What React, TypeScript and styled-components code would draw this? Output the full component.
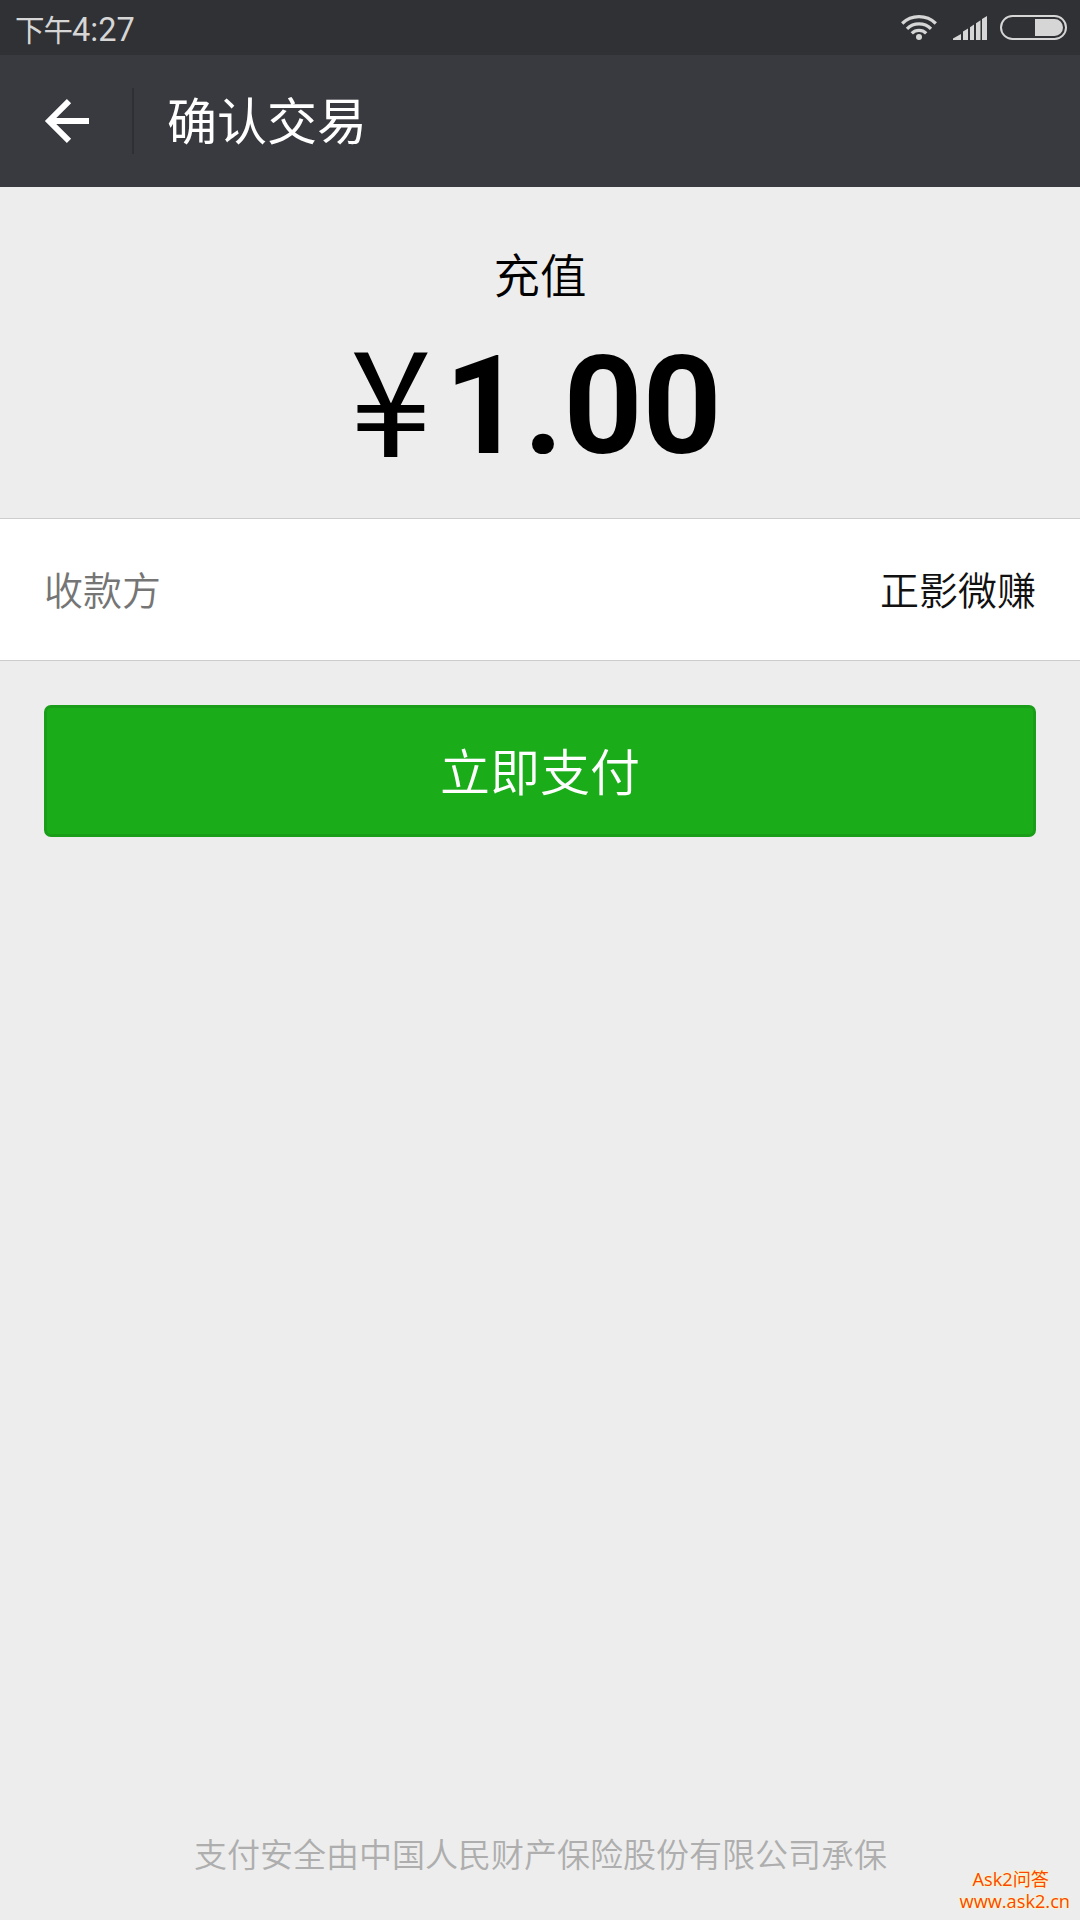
import React from 'react';
import styled, { createGlobalStyle } from 'styled-components';

const GlobalStyle = createGlobalStyle`
  * { box-sizing: border-box; }
  body {
    margin: 0;
    background: #ededed;
    font-family: "Noto Sans CJK SC", sans-serif;
    font-weight: 350;
  }
`;

const Screen = styled.div`
  position: relative;
  display: flex;
  flex-direction: column;
  width: 1080px;
  height: 1920px;
  overflow: hidden;
  background: #ededed;
`;

const StatusBar = styled.div`
  display: flex;
  align-items: center;
  justify-content: space-between;
  height: 55px;
  padding: 0 13px 0 15px;
  background: #303135;
  color: #d6d6d6;
`;

const Clock = styled.div`
  display: flex;
  align-items: baseline;
  height: 55px;
  line-height: 56px;
  font-size: 29.5px;
  font-weight: 400;
  letter-spacing: -1px;
`;

const Digits = styled.span`
  font-family: Roboto, sans-serif;
  font-size: 32.5px;
  letter-spacing: 0;
`;

const StatusIcons = styled.div`
  display: flex;
  align-items: center;
  height: 55px;
`;

const Header = styled.header`
  display: flex;
  align-items: center;
  height: 132px;
  background: #393a3f;
  color: #fff;
`;

const BackButton = styled.button`
  display: flex;
  align-items: center;
  width: 132px;
  height: 132px;
  padding: 0 0 0 44px;
  border: 0;
  background: none;
`;

const Divider = styled.div`
  width: 2px;
  height: 66px;
  background: #2e2f33;
`;

const Title = styled.h1`
  margin: 0 0 0 33px;
  padding-bottom: 6px;
  font-size: 50px;
  line-height: 60px;
  font-weight: 400;
`;

const Summary = styled.section`
  display: flex;
  flex-direction: column;
  align-items: center;
  height: 331px;
  padding-top: 43px;
  color: #000;
`;

const Purpose = styled.div`
  font-size: 46.5px;
  line-height: 86px;
`;

const Amount = styled.div`
  display: flex;
  align-items: baseline;
  height: 160px;
  margin: -7px 0 0 -21px;
  font-family: Roboto, sans-serif;
  font-size: 138px;
  line-height: 160px;
  font-weight: 700;
`;

const Currency = styled.span`
  display: flex;
  justify-content: center;
  width: 107px;
  font-family: "Noto Sans CJK SC", sans-serif;
  font-size: 147px;
  font-weight: 400;
  transform: translateY(4px);
`;

const PayeeRow = styled.section`
  display: flex;
  align-items: center;
  justify-content: space-between;
  height: 143px;
  padding: 0 44px 4px;
  border-top: 1px solid #cdcdcd;
  border-bottom: 1px solid #cdcdcd;
  background: #fff;
  font-size: 39px;
  line-height: 60px;
`;

const Label = styled.span`
  color: #757575;
`;

const Payee = styled.span`
  color: #111;
`;

const PayButton = styled.button`
  height: 132px;
  margin: 44px 44px 0;
  padding: 0 0 5px;
  border: 3px solid #1a9e19;
  border-radius: 7px;
  background: #1aad19;
  color: #fff;
  font-family: inherit;
  font-size: 50px;
  font-weight: inherit;
  line-height: 60px;
`;

const Insurance = styled.footer`
  margin-top: auto;
  padding: 0 0 41px 1px;
  text-align: center;
  color: #aeaeae;
  font-size: 33px;
  line-height: 52px;
`;

const Watermark = styled.div`
  position: absolute;
  right: 10px;
  bottom: 8px;
  display: flex;
  flex-direction: column;
  align-items: center;
  color: #ff4500;
  font-family: "Open Sans", "Noto Sans CJK SC", sans-serif;
  font-size: 18.2px;
  font-weight: 400;
  line-height: 22px;
  text-shadow: 0 0 2px #ffffb0, 0 0 2px #ffffb0;
`;

const SiteName = styled.span`
  margin-right: 8px;
`;

const WifiIcon = () => (
  <svg width="36" height="28" viewBox="0 0 36 28" fill="none" stroke="#d6d6d6" strokeWidth="3.3">
    <path d="M1.2 9.500a24 24 0 0 1 33.6 0" />
    <path d="M6 14.800a17 17 0 0 1 24 0" />
    <path d="M10.8 19.400a10.2 10.2 0 0 1 14.4 0" />
    <circle cx="18" cy="23" r="3" fill="#d6d6d6" stroke="none" />
  </svg>
);

const SignalIcon = () => (
  <svg width="34" height="24" viewBox="0 0 34 24" fill="#d6d6d6" style={{ marginLeft: 16 }}>
    <path d="M0 24v-1.6L8 18v6zM10 24v-8.4l5-3.2V24zM17 24V11.2l4-2.7V24zM23 24V7.2l4.500-3V24zM29 24V3l5-3v24z" />
  </svg>
);

const BatteryIcon = () => (
  <svg width="67" height="25" viewBox="0 0 67 25" style={{ marginLeft: 13 }}>
    <rect x="1" y="1" width="65" height="23" rx="11.5" fill="none" stroke="#d6d6d6" strokeWidth="2" />
    <path d="M35 4h19.500a8.500 8.500 0 0 1 0 17H35z" fill="#d6d6d6" />
  </svg>
);

const BackArrow = () => (
  <svg width="46" height="46" viewBox="0 0 46 46" fill="none" stroke="#fff" strokeWidth="6">
    <path d="M25 3.100 5.100 23 25 42.900M5 23h40" />
  </svg>
);

export default function App() {
  return (
    <>
      <GlobalStyle />
      <Screen>
        <StatusBar>
          <Clock>
            下午<Digits>4:27</Digits>
          </Clock>
          <StatusIcons>
            <WifiIcon />
            <SignalIcon />
            <BatteryIcon />
          </StatusIcons>
        </StatusBar>
        <Header>
          <BackButton aria-label="返回">
            <BackArrow />
          </BackButton>
          <Divider />
          <Title>确认交易</Title>
        </Header>
        <Summary>
          <Purpose>充值</Purpose>
          <Amount>
            <Currency>¥</Currency>1.00
          </Amount>
        </Summary>
        <PayeeRow>
          <Label>收款方</Label>
          <Payee>正影微赚</Payee>
        </PayeeRow>
        <PayButton>立即支付</PayButton>
        <Insurance>支付安全由中国人民财产保险股份有限公司承保</Insurance>
        <Watermark>
          <SiteName>Ask2问答</SiteName>
          <span>www.ask2.cn</span>
        </Watermark>
      </Screen>
    </>
  );
}
